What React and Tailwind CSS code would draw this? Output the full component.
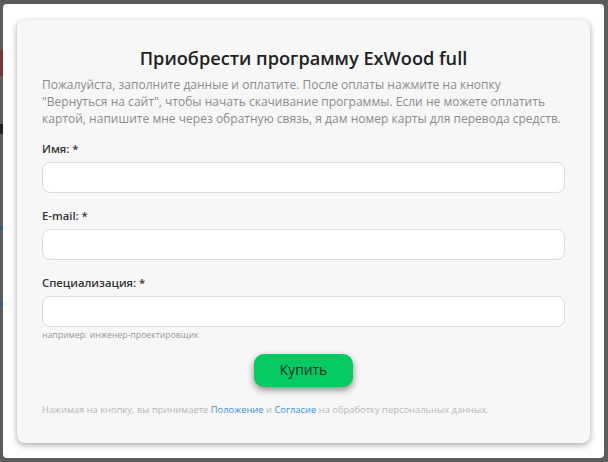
export default function App() {
  const font = { fontFamily: '"Open Sans", "Noto Sans", sans-serif' };
  return (
    <div className="relative w-[608px] h-[462px] bg-[#5c5c5c] overflow-hidden" style={font}>
      <div className="absolute left-0 top-[50px] w-[4px] h-[26px] bg-[#7a3434]" />
      <div className="absolute left-0 top-[124px] w-[4px] h-[10px] bg-[#222]" />
      <div className="absolute left-0 top-[226px] w-[3px] h-[4px] bg-[#2f5f9a]" />
      <div className="absolute left-0 top-[302px] w-[3px] h-[4px] bg-[#2f5f9a]" />
      <div className="absolute left-[3px] top-[4px] right-[4px] bottom-[4px] bg-white rounded-[4px] p-[16px_14px_15px_14px] flex">
        <div className="flex-1 bg-[#f7f7f7] rounded-[8px] shadow-[0_2px_6px_rgba(0,0,0,0.35)] px-[25px] pt-[25px] flex flex-col">
          <h1 className="text-center text-[18.2px] leading-[26px] font-semibold text-[#222]">Приобрести программу ExWood full</h1>
          <p className="mt-[5px] text-[12px] leading-[17px] tracking-[0.02px] text-[#8c8c8c]">
            Пожалуйста, заполните данные и оплатите. После оплаты нажмите на кнопку<br />
            "Вернуться на сайт", чтобы начать скачивание программы. Если не можете оплатить<br />
            картой, напишите мне через обратную связь, я дам номер карты для перевода средств.
          </p>
          <label className="mt-[13px] text-[11.3px] leading-[17px] font-semibold text-[#333]">Имя: *</label>
          <div className="mt-[5px] h-[31px] bg-white border border-[#dcdcdc] rounded-[8px]" />
          <label className="mt-[14px] text-[11.3px] leading-[17px] font-semibold text-[#333]">E-mail: *</label>
          <div className="mt-[5px] h-[31px] bg-white border border-[#dcdcdc] rounded-[8px]" />
          <label className="mt-[14px] text-[11.3px] leading-[17px] font-semibold text-[#333]">Специализация: *</label>
          <div className="mt-[5px] h-[31px] bg-white border border-[#dcdcdc] rounded-[8px]" />
          <div className="mt-[2px] text-[8.7px] leading-[12px] text-[#999]">например: инженер-проектировщик</div>
          <div className="flex justify-center mt-[13px]">
            <button className="w-[99px] h-[33px] rounded-[10px] bg-[#03cb62] text-[13.8px] text-[#1f2a22] shadow-[0_3px_7px_rgba(0,0,0,0.45)]">Купить</button>
          </div>
          <div className="mt-[16px] text-[9.4px] leading-[14px] text-[#b8b8b8]">
            Нажимая на кнопку, вы принимаете <span className="text-[#3d8fe6]">Положение</span> и <span className="text-[#3d8fe6]">Согласие</span> на обработку персональных данных.
          </div>
        </div>
      </div>
    </div>
  );
}
